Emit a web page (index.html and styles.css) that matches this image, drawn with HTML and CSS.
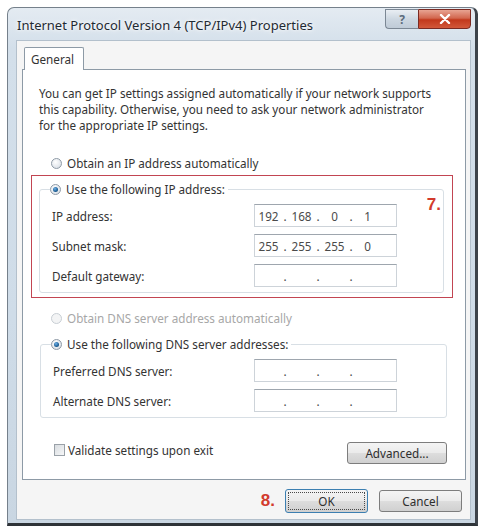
FILE: index.html
```html
<!DOCTYPE html>
<html lang="en">
<head>
<meta charset="utf-8">
<title>Internet Protocol Version 4 (TCP/IPv4) Properties</title>
<link rel="stylesheet" href="styles.css">
</head>
<body>
<div class="window">
  <div class="titlebar">
    <span class="title">Internet Protocol Version 4 (TCP/IPv4) Properties</span>
    <div class="caption-buttons">
      <span class="cap-btn help">?</span>
      <span class="cap-btn close">
        <svg width="12" height="10" viewBox="0 0 12 10"><path d="M2 1 L10 9 M10 1 L2 9" stroke="#fff" stroke-width="2.4" stroke-linecap="round"/></svg>
      </span>
    </div>
  </div>

  <div class="client">
    <div class="tabs"><span class="tab">General</span></div>
    <div class="panel">
      <p class="intro">You can get IP settings assigned automatically if your network supports<br>this capability. Otherwise, you need to ask your network administrator<br>for the appropriate IP settings.</p>

      <label class="option"><span class="radio"></span>Obtain an IP address automatically</label>

      <div class="marked">
        <span class="step step-7">7.</span>
        <fieldset class="group">
          <legend><span class="radio checked"></span>Use the following IP address:</legend>
          <div class="fields">
            <span class="field-label">IP address:</span>
            <span class="ipbox"><span class="seg">192</span><span class="dot">.</span><span class="seg">168</span><span class="dot">.</span><span class="seg">0</span><span class="dot">.</span><span class="seg">1</span></span>
            <span class="field-label">Subnet mask:</span>
            <span class="ipbox"><span class="seg">255</span><span class="dot">.</span><span class="seg">255</span><span class="dot">.</span><span class="seg">255</span><span class="dot">.</span><span class="seg">0</span></span>
            <span class="field-label">Default gateway:</span>
            <span class="ipbox"><span class="seg"></span><span class="dot">.</span><span class="seg"></span><span class="dot">.</span><span class="seg"></span><span class="dot">.</span><span class="seg"></span></span>
          </div>
        </fieldset>
      </div>

      <label class="option disabled"><span class="radio"></span>Obtain DNS server address automatically</label>

      <fieldset class="group dns">
        <legend><span class="radio checked"></span>Use the following DNS server addresses:</legend>
        <div class="fields">
          <span class="field-label">Preferred DNS server:</span>
          <span class="ipbox"><span class="seg"></span><span class="dot">.</span><span class="seg"></span><span class="dot">.</span><span class="seg"></span><span class="dot">.</span><span class="seg"></span></span>
          <span class="field-label">Alternate DNS server:</span>
          <span class="ipbox"><span class="seg"></span><span class="dot">.</span><span class="seg"></span><span class="dot">.</span><span class="seg"></span><span class="dot">.</span><span class="seg"></span></span>
        </div>
      </fieldset>

      <div class="panel-footer">
        <label class="check"><span class="checkbox"></span>Validate settings upon exit</label>
        <span class="button advanced">Advanced...</span>
      </div>
    </div>

    <div class="dialog-buttons">
      <span class="step">8.</span>
      <span class="button default"><span class="focus">OK</span></span>
      <span class="button">Cancel</span>
    </div>
  </div>
</div>
</body>
</html>
```

FILE: styles.css
```css
html, body {
  margin: 0;
  background: #ffffff;
}

body {
  font-family: "Noto Sans", "Liberation Sans", sans-serif;
  font-size: 11.7px;
  color: #333333;
}

/* ---- window frame ---- */
.window {
  box-sizing: border-box;
  margin: 7px 0 0 7px;
  width: 471px;
  height: 519px;
  border: 1px solid #75808b;
  border-right: 3px solid #3d434a;
  border-bottom: 3px solid #2e3338;
  border-radius: 7px 7px 0 0;
  padding: 0 4px 3px 8px;
  background: linear-gradient(#e4ebf2, #d3dfea 40px, #cfdce8 60%, #c9d6e2);
  display: flex;
  flex-direction: column;
}

.titlebar {
  height: 32px;
  display: flex;
  justify-content: space-between;
  align-items: flex-start;
}

.title {
  margin: 8px 0 0 1px;
  font-size: 13px;
  color: #1f2a33;
  text-shadow: 0 0 6px #ffffff, 0 0 3px #ffffff;
}

.caption-buttons {
  display: flex;
  margin-top: 1px;
}

.cap-btn {
  height: 20px;
  box-sizing: border-box;
  display: flex;
  align-items: center;
  justify-content: center;
  border: 1px solid #7b8794;
}

.help {
  width: 33px;
  border-right: none;
  border-radius: 0 0 0 4px;
  background: linear-gradient(#e9eef3, #cdd7e1 50%, #bfcbd7);
  color: #5b6b7c;
  font-weight: bold;
  font-size: 12px;
}

.close {
  width: 53px;
  border-color: #7a2a22;
  border-radius: 0 0 4px 0;
  background: linear-gradient(#e8a493, #d2674f 45%, #c2381c 55%, #d2583a);
}

/* ---- client area ---- */
.client {
  flex: 1;
  background: #f5f5f5;
  border: 1px solid #b3c0cc;
  padding: 6px 4px 0 5px;
  display: flex;
  flex-direction: column;
}

.tabs {
  display: flex;
  padding-left: 2px;
}

.tab {
  height: 23px;
  box-sizing: border-box;
  padding: 3px 9px 0 6px;
  border: 1px solid #8d9aa6;
  border-bottom: none;
  background: #ffffff;
  margin-bottom: -1px;
  position: relative;
  z-index: 1;
  border-radius: 2px 2px 0 0;
}

.panel {
  height: 411px;
  box-sizing: border-box;
  border: 1px solid #8d9aa6;
  background: #ffffff;
  padding: 15px 12px 0 8px;
}

.intro {
  margin: 0 0 22px 8px;
  line-height: 16px;
}

/* ---- radio buttons / options ---- */
.option {
  display: flex;
  align-items: center;
  height: 16px;
  margin-left: 20px;
}

.radio {
  width: 11px;
  height: 11px;
  box-sizing: border-box;
  border-radius: 50%;
  border: 1px solid #8e9aa6;
  background: radial-gradient(circle at 40% 35%, #ffffff, #dfe4ea 70%, #c7cfd8);
  margin-right: 5px;
  display: flex;
  align-items: center;
  justify-content: center;
  flex: none;
}

.radio.checked::after {
  content: "";
  width: 5px;
  height: 5px;
  border-radius: 50%;
  background: radial-gradient(circle at 40% 35%, #6fb1e8, #1d5f96 60%, #103a5c);
}

.option.disabled {
  margin-top: 12px;
  color: #a7a7a7;
}

.option.disabled .radio {
  border-color: #c8ced4;
  background: #f3f4f5;
}

/* ---- highlighted block with step number ---- */
.marked {
  position: relative;
  margin: 4px 0 0 0;
  border: 1px solid #c24552;
  padding: 0 8px 4px 7px;
}

.step {
  color: #d23a2c;
  font-family: "Liberation Sans", sans-serif;
  font-weight: bold;
  font-size: 17px;
}

.step-7 {
  position: absolute;
  right: 11px;
  top: 19px;
}

/* ---- group boxes ---- */
.group {
  margin: 5px 0 0 0;
  border: 1px solid #d8dfe5;
  border-radius: 3px;
  padding: 7px 46px 5px 12px;
}

.group legend {
  display: flex;
  align-items: center;
  height: 16px;
  padding: 0 3px 0 0;
  margin-left: -2px;
}

.group.dns {
  margin: 10px 6px 0 9px;
  padding: 7px 49px 5px 12px;
}

.fields {
  display: grid;
  grid-template-columns: 1fr 143px;
  row-gap: 7px;
  align-items: center;
}

.ipbox {
  height: 23px;
  box-sizing: border-box;
  border: 1px solid #cdd3d9;
  border-top-color: #9ea6ae;
  background: #ffffff;
  display: flex;
  align-items: center;
  color: #4a4a4a;
}

.seg {
  width: 27px;
  text-align: center;
}

.dot {
  width: 6px;
  text-align: center;
}

/* ---- footer of the tab page ---- */
.panel-footer {
  margin: 24px 6px 0 23px;
  display: flex;
  justify-content: space-between;
  align-items: flex-start;
}

.check {
  display: flex;
  align-items: center;
  height: 16px;
}

.checkbox {
  width: 11px;
  height: 12px;
  box-sizing: border-box;
  border: 1px solid #9aa1a8;
  background: linear-gradient(135deg, #d8dce0, #f6f7f8);
  margin-right: 3px;
}

/* ---- push buttons ---- */
.button {
  box-sizing: border-box;
  height: 22px;
  width: 83px;
  display: flex;
  align-items: center;
  justify-content: center;
  border: 1px solid #7d7d7d;
  border-radius: 3px;
  background: linear-gradient(#f4f4f4, #ebebeb 48%, #dddddd 52%, #d0d0d0);
  color: #2e2e2e;
}

.button.advanced {
  width: 100px;
}

.dialog-buttons {
  display: flex;
  justify-content: flex-end;
  align-items: center;
  gap: 10px;
  margin-top: 9px;
  padding-right: 4px;
}

.button.default {
  height: 24px;
  border-color: #3c7fb1;
  padding: 2px;
  margin-right: 1px;
}

.focus {
  width: 100%;
  height: 100%;
  box-sizing: border-box;
  border: 1px dotted #4a4a4a;
  display: flex;
  align-items: center;
  justify-content: center;
}
```
